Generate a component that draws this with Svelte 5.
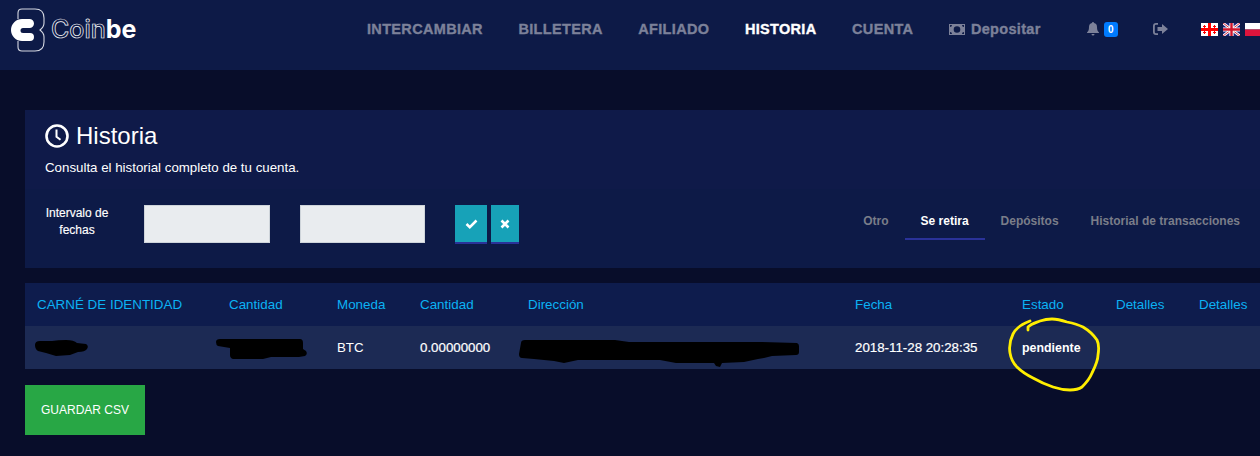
<script>
  const navItems = [
    { label: 'INTERCAMBIAR' },
    { label: 'BILLETERA' },
    { label: 'AFILIADO' },
    { label: 'HISTORIA', active: true },
    { label: 'CUENTA' }
  ];
  const tabs = ['Otro', 'Se retira', 'Depósitos', 'Historial de transacciones'];
  const columns = ['CARNÉ DE IDENTIDAD', 'Cantidad', 'Moneda', 'Cantidad', 'Dirección', 'Fecha', 'Estado', 'Detalles', 'Detalles'];
  const widths = [192, 108, 83, 108, 327, 167, 94, 83, 73];
</script>

<header class="topbar">
  <a class="logo" href="#top">
    <svg class="mark" width="36" height="44" viewBox="0 0 36 44">
      <path d="M8 11V5Q8 1 12 1H25Q34 1 34 10V15Q34 19 30 22 34 25 34 29V34Q34 43 25 43H12Q8 43 8 39V33" fill="none" stroke="#d5d8e2" stroke-width="1.100" />
      <path d="M12 11H19.500a4.500 4.500 0 0 1 0 9H13a2.500 2.500 0 0 0 0 5H20a4 4 0 0 1 0 8H12A11 11 0 0 1 12 11z" fill="#fff" />
    </svg>
    <span class="wordmark"><span class="outline">Coin</span>be</span>
  </a>

  <nav class="menu">
    {#each navItems as item}
      <a href="#top" class:active={item.active}>{item.label}</a>
    {/each}
    <a href="#top" class="deposit">
      <svg width="16" height="11" viewBox="0 0 16 11">
        <path fill="#7c8199" fill-rule="evenodd" d="M0 0h16v11H0zM8 2.200a3.300 3.300 0 1 0 0 6.600 3.300 3.300 0 0 0 0-6.600zM1 1v2a2 2 0 0 0 2-2zm12 0a2 2 0 0 0 2 2V1zM1 8v2h2a2 2 0 0 0-2-2zm14 0a2 2 0 0 0-2 2h2z" />
      </svg>
      Depositar
    </a>
  </nav>

  <div class="tools">
    <div class="bell">
      <svg width="12" height="14" viewBox="0 0 12 14">
        <path fill="#7c8199" d="M6 0a1 1 0 0 1 1 1.100C9 1.500 10 3 10 5c0 3 .7 4.300 2 5.500V11H0v-.5C1.300 9.300 2 8 2 5c0-2 1-3.500 3-3.900A1 1 0 0 1 6 0zM4.500 12h3a1.500 1.500 0 0 1-3 0z" />
      </svg>
      <span class="badge">0</span>
    </div>
    <svg class="signout" width="15" height="12" viewBox="0 0 15 12">
      <path fill="#7c8199" d="M5 0v1.800H3q-1.200 0-1.200 1.200v6q0 1.200 1.200 1.200h2V12H3q-3 0-3-3V3q0-3 3-3zM9 1l6 5-6 5V8H4.500V4H9z" />
    </svg>
    <div class="flags">
      <svg width="17" height="13" viewBox="0 0 17 13">
        <rect width="17" height="13" fill="#fff" />
        <path d="M7 0h3v13H7zM0 5h17v3H0z" fill="#f00" />
        <path d="M3 2h1v1h1v1H4v1H3V4H2V3h1zM13 2h1v1h1v1h-1v1h-1V4h-1V3h1zM3 8h1v1h1v1H4v1H3v-1H2V9h1zM13 8h1v1h1v1h-1v1h-1v-1h-1V9h1z" fill="#f00" />
      </svg>
      <svg width="17" height="13" viewBox="0 0 17 13">
        <rect width="17" height="13" fill="#1a237b" />
        <path d="M0 0l17 13M17 0L0 13" stroke="#fff" stroke-width="2.600" />
        <path d="M0 0l17 13M17 0L0 13" stroke="#cf142b" stroke-width="0.900" />
        <path d="M8.500 0v13M0 6.500h17" stroke="#fff" stroke-width="4.200" />
        <path d="M8.500 0v13M0 6.500h17" stroke="#cf142b" stroke-width="2.400" />
      </svg>
      <svg width="17" height="13" viewBox="0 0 17 13">
        <rect width="17" height="6.500" fill="#fff" />
        <rect y="6.500" width="17" height="6.500" fill="#dc143c" />
      </svg>
    </div>
  </div>
</header>

<main class="page">
  <section class="card">
    <div class="card-head">
      <h1>
        <svg width="24" height="24" viewBox="0 0 24 24">
          <circle cx="12" cy="12" r="10.500" fill="none" stroke="#fff" stroke-width="2.600" />
          <path d="M11.500 5.500v7.200l4 3" fill="none" stroke="#fff" stroke-width="2" />
        </svg>
        Historia
      </h1>
      <p>Consulta el historial completo de tu cuenta.</p>
    </div>
    <div class="filters">
      <span class="range-label">Intervalo de fechas</span>
      <input class="date first" type="text" />
      <input class="date" type="text" />
      <div class="actions">
        <button type="button" class="wide" aria-label="Aplicar">
          <svg width="13" height="10" viewBox="0 0 13 10"><path d="M1.500 5l3.300 3.200 6.700-6.700" fill="none" stroke="#fff" stroke-width="2.500" /></svg>
        </button>
        <button type="button" class="narrow" aria-label="Borrar">
          <svg width="10" height="10" viewBox="0 0 10 10"><path d="M1.500 1.500l7 7m0-7l-7 7" fill="none" stroke="#fff" stroke-width="2.600" /></svg>
        </button>
      </div>
      <div class="tabs">
        {#each tabs as tab}
          <a href="#top" class:current={tab === 'Se retira'}>{tab}</a>
        {/each}
      </div>
    </div>
  </section>

  <div class="table-wrap">
    <table>
      <colgroup>
        {#each widths as w}
          <col style="width: {w}px" />
        {/each}
      </colgroup>
      <thead>
        <tr>
          {#each columns as col}
            <th>{col}</th>
          {/each}
        </tr>
      </thead>
      <tbody>
        <tr>
          <td></td>
          <td></td>
          <td>BTC</td>
          <td class="num">0.00000000</td>
          <td></td>
          <td class="num">2018-11-28 20:28:35</td>
          <td class="state">pendiente</td>
          <td></td>
          <td></td>
        </tr>
      </tbody>
    </table>
    <!-- scribbles drawn over the screenshot: redactions and the yellow ring -->
    <svg class="marks" width="1235" height="120" viewBox="0 0 1235 120">
      <path fill="#000" d="M10 62q0-4 5-4l12 0q6-1 14-1 8 0 11 3l9 1q3 2 1 5-2 3-9 3l-8 3-14 1-10-3-8-2q-3-2-3-6z" />
      <path fill="#000" d="M191 59q0-3 4-3l80 0q3 0 3 4v6l3 2q2 3-1 5l-6 1-28 0-8 2-30 0q-3-1-3-4v-7l-12-2q-2-1-2-4z" />
      <path fill="#000" d="M496 60q0-3 4-3l90 0 14 2 132 0 36 1q2 1 2 3v6q0 3-3 3l-24 1-8 2-6 1-14 3-22 1-2 4-4-1-2-3-38 0-16-3-60 0-22 0-14 3-10-2-20-2-12-1q-3 0-3-4z" />
      <path fill="none" stroke="#ffee00" stroke-width="2.800" stroke-linecap="round" stroke-linejoin="round" d="M1005 38C997 41 991 45 988 51 985 57 984 64 985 70 986 76 989 81 992 84 997 89 1002 92 1008 95 1015 99 1022 102 1028 104 1034 106 1040 107 1045 107 1050 107 1054 106 1057 104 1062 99 1065 95 1067 90 1070 84 1073 78 1073 72 1074 66 1074 61 1072 57 1068 51 1063 47 1058 44 1052 41 1047 40 1042 39 1036 37 1031 36 1027 36 1022 36 1018 37 1015 38 1010 40 1006 41 1003 44L1003 47" />
    </svg>
  </div>

  <button type="button" class="save">GUARDAR CSV</button>
</main>

<style>
  :global(html),
  :global(body) {
    margin: 0;
    background: #080d2a;
    overflow: hidden;
  }

  a {
    text-decoration: none;
    color: inherit;
  }

  .topbar {
    display: flex;
    align-items: center;
    height: 70px;
    background: #0d1a47;
    overflow: hidden;
    font-family: 'Liberation Sans', Arial, sans-serif;
  }

  .logo {
    display: flex;
    align-items: center;
    width: 367px;
    flex: none;
    padding-left: 10px;
    box-sizing: border-box;
    color: #fff;
  }

  .mark {
    flex: none;
    margin-top: -10px;
  }

  .wordmark {
    margin-left: 5px;
    margin-top: -13px;
    font-family: Inter, sans-serif;
    font-size: 25px;
    font-weight: 700;
  }

  .outline {
    color: #0d1a47;
    -webkit-text-stroke: 0.7px #fff;
    font-weight: 500;
  }

  .menu {
    display: flex;
    align-items: center;
    gap: 35.500px;
    font-size: 14.500px;
    font-weight: 700;
    color: #7c8199;
    -webkit-text-stroke: 0.35px currentColor;
    letter-spacing: 0.33px;
    margin-top: -12px;
  }

  .menu .active {
    color: #fff;
  }

  .deposit {
    display: flex;
    align-items: center;
    gap: 6px;
  }

  .tools {
    display: flex;
    align-items: center;
    margin-left: 46px;
    margin-top: -12px;
  }

  .bell {
    display: flex;
    align-items: center;
    gap: 5px;
    margin-right: 35px;
  }

  .badge {
    width: 14px;
    height: 15px;
    border-radius: 3px;
    background: #007bff;
    color: #fff;
    font-size: 10px;
    font-weight: 700;
    line-height: 15px;
    text-align: center;
  }

  .flags {
    display: flex;
    gap: 5px;
    margin-left: 33px;
  }

  .flags svg {
    flex: none;
    display: block;
  }

  .page {
    padding: 40px 0 0 25px;
    font-family: 'Liberation Sans', Arial, sans-serif;
    color: #fff;
  }

  .card {
    height: 158px;
    background: #0d1a47;
  }

  .card-head {
    height: 79px;
    box-sizing: border-box;
    padding: 14px 0 0 20px;
    background: #0f1a49;
  }

  h1 {
    display: flex;
    align-items: center;
    gap: 7px;
    margin: 0;
    height: 24px;
    font-size: 24px;
    font-weight: 400;
  }

  .card-head p {
    margin: 12px 0 0;
    font-size: 13.300px;
  }

  .filters {
    display: flex;
    align-items: flex-start;
    padding: 16px 4px 0 20px;
  }

  .range-label {
    width: 64px;
    font-size: 12px;
    line-height: 17px;
    text-align: center;
    -webkit-text-stroke: 0.15px #fff;
  }

  .date {
    width: 125px;
    height: 38px;
    box-sizing: border-box;
    margin-left: 30px;
    border: 1px solid #ced4da;
    background: #e9ecef;
    padding: 0;
  }

  .date.first {
    width: 126px;
    margin-left: 35px;
  }

  .actions {
    display: flex;
    gap: 4px;
    margin-left: 30px;
  }

  .actions button {
    display: grid;
    place-items: center;
    height: 39px;
    padding: 0;
    border: 0;
    border-bottom: 2px solid #2a3299;
    background: #17a2b8;
  }

  .wide {
    width: 32px;
  }

  .narrow {
    width: 28px;
  }

  .tabs {
    display: flex;
    margin-left: auto;
    font-size: 12px;
    font-weight: 700;
    color: #7a7d89;
  }

  .tabs a {
    height: 35px;
    padding: 0 16px;
    line-height: 32px;
    box-sizing: border-box;
  }

  .tabs .current {
    color: #fff;
    border-bottom: 2px solid #2a3299;
  }

  .table-wrap {
    position: relative;
    margin-top: 15px;
  }

  table {
    width: 1235px;
    table-layout: fixed;
    border-collapse: collapse;
    font-size: 13.400px;
  }

  th {
    height: 43px;
    padding: 0 0 0 12px;
    background: #0e1c4d;
    color: #0bb2f4;
    font-weight: 400;
    text-align: left;
    white-space: nowrap;
  }

  td {
    height: 43px;
    padding: 0 0 0 12px;
    background: #1c2a54;
    font-size: 13.300px;
    white-space: nowrap;
  }

  .num {
    -webkit-text-stroke: 0.2px #fff;
  }

  .state {
    font-size: 12.400px;
    font-weight: 700;
  }

  .marks {
    position: absolute;
    left: 0;
    top: 0;
    pointer-events: none;
  }

  .save {
    display: block;
    width: 120px;
    height: 50px;
    margin-top: 16px;
    padding: 0;
    border: 0;
    background: #28a745;
    color: #fff;
    font-family: 'Liberation Sans', Arial, sans-serif;
    font-size: 12px;
  }
</style>
